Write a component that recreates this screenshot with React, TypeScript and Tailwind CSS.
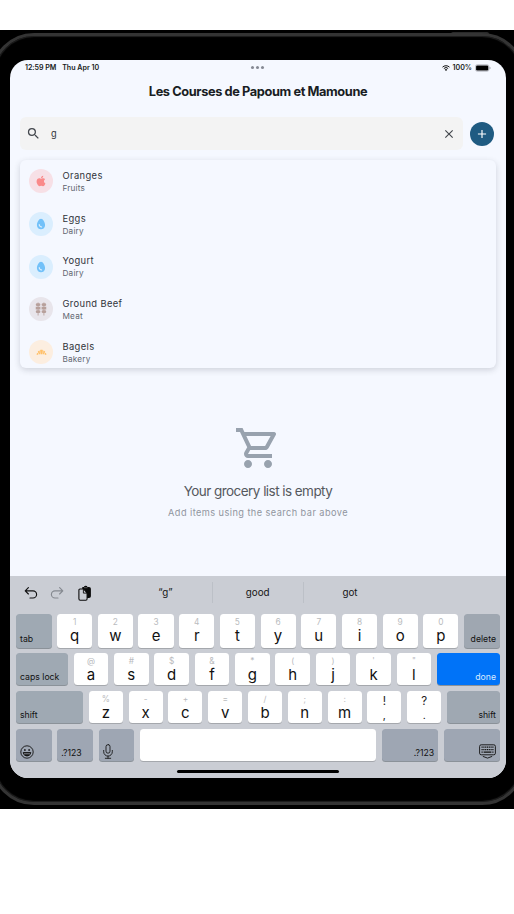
import React from 'react';
import {
  MdSearch,
  MdClose,
  MdAdd,
  MdOutlineShoppingCart,
  MdEgg,
  MdKebabDining,
  MdBakeryDining,
} from 'react-icons/md';
import { FaApple } from 'react-icons/fa';

const items = [
  { name: 'Oranges', category: 'Fruits', Icon: FaApple, tint: 'bg-[#f7e0e6] text-[#fa8a8a]', size: 'size-[12px]' },
  { name: 'Eggs', category: 'Dairy', Icon: MdEgg, tint: 'bg-[#daeefe] text-[#72c1f9]', size: 'size-[14px]' },
  { name: 'Yogurt', category: 'Dairy', Icon: MdEgg, tint: 'bg-[#daeefe] text-[#72c1f9]', size: 'size-[14px]' },
  { name: 'Ground Beef', category: 'Meat', Icon: MdKebabDining, tint: 'bg-[#e8e5eb] text-[#b7a09b]', size: 'size-[14px]' },
  { name: 'Bagels', category: 'Bakery', Icon: MdBakeryDining, tint: 'bg-[#fceee0] text-[#ffc069]', size: 'size-[13px]' },
];

const row1 = [['1', 'q'], ['2', 'w'], ['3', 'e'], ['4', 'r'], ['5', 't'], ['6', 'y'], ['7', 'u'], ['8', 'i'], ['9', 'o'], ['0', 'p']];
const row2 = [['@', 'a'], ['#', 's'], ['$', 'd'], ['&', 'f'], ['*', 'g'], ['(', 'h'], [')', 'j'], ["'", 'k'], ['"', 'l']];
const row3 = [['%', 'z'], ['-', 'x'], ['+', 'c'], ['=', 'v'], ['/', 'b'], [';', 'n'], [':', 'm'], ['!', ','], ['?', '.']];

function Key({ top, main }: { top: string; main: string }) {
  const punctuation = top === '!' || top === '?';
  return (
    <div className="flex h-full min-w-0 flex-1 flex-col items-center rounded-[3.5px] bg-white pt-[4.5px] shadow-[0_1px_0_#a5a8ad]">
      <span className={punctuation ? 'text-[11.5px] leading-[13.5px] text-[#222]' : 'text-[8.3px] leading-[9px] text-[#b9bbbe]'}>{top}</span>
      <span className={punctuation ? 'text-[10.5px] leading-[13.5px] text-[#111]' : 'text-[15px] leading-[17.5px] text-[#111]'}>{main}</span>
    </div>
  );
}

function DarkKey({ children, className }: { children: React.ReactNode; className: string }) {
  return (
    <div className={'flex h-full shrink-0 items-end rounded-[3.5px] px-1 pb-[2.6px] text-[8.7px] leading-[11px] text-[#111] shadow-[0_1px_0_#8b9299] ' + className}>
      {children}
    </div>
  );
}

function Undo({ className }: { className: string }) {
  return (
    <svg viewBox="0 0 14 14" className={'h-[14px] w-[14px] ' + className} fill="none" stroke="currentColor" strokeWidth="1.15" strokeLinecap="round" strokeLinejoin="round">
      <path d="M4.4 1.6 1.2 4.8l3.2 3.2M1.4 4.8h7.6a3.6 3.6 0 0 1 0 7.2H6" />
    </svg>
  );
}

function StatusBar() {
  return (
    <div className="grid h-[15px] grid-cols-3 items-center px-[15px] text-[7.1px] font-semibold leading-[15px] text-[#161a20]">
      <div className="flex gap-[6px]">
        <span className="tracking-[-0.05px]">12:59 PM</span>
        <span>Thu Apr 10</span>
      </div>
      <div className="flex justify-center gap-[2px]">
        <i className="size-[3px] rounded-full bg-[#858994]" />
        <i className="size-[3px] rounded-full bg-[#858994]" />
        <i className="size-[3px] rounded-full bg-[#858994]" />
      </div>
      <div className="flex items-center justify-end">
        <svg viewBox="0 0 16 12" className="mr-[3px] h-[6px] w-[8px]" fill="none" stroke="#111" strokeWidth="2">
          <path d="M1 4.3a10 10 0 0 1 14 0M3.7 7a6.2 6.2 0 0 1 8.6 0" />
          <path d="m8 11.8-2.5-2.5a3.6 3.6 0 0 1 5 0Z" fill="#111" stroke="none" />
        </svg>
        <span>100%</span>
        <svg viewBox="0 0 16 8" className="ml-[3px] h-[8px] w-[16px]">
          <rect x=".4" y=".7" width="13.6" height="6.6" rx="2" fill="none" stroke="#9a9ea6" strokeWidth=".6" />
          <rect x="1.1" y="1.5" width="12.2" height="5" rx="1.3" fill="#000" />
          <path d="M14.6 3v2q1 0 1-1t-1-1" fill="#999da3" />
        </svg>
      </div>
    </div>
  );
}

function Keyboard() {
  return (
    <div className="h-[202px] bg-[#cacdd4] px-[6px]">
      <div className="flex h-[33px] items-center">
        <div className="flex w-[103.5px] items-center pl-[7.5px]">
          <Undo className="text-[#111]" />
          <Undo className="ml-[12.5px] -scale-x-100 text-[#858990]" />
          <svg viewBox="0 0 14 16" className="ml-[14px] h-[16px] w-[14px]">
            <path d="M4.3 1.9h1.6q.3-1.2 1.8-1.2t1.8 1.2H11q1.9 0 1.9 1.8v7.6q0 1.8-1.9 1.8H4.3Z" fill="#0a0a0a" />
            <path d="M6 2.7h3.5" stroke="#777" strokeWidth=".7" />
            <path d="M2 4h3.6l3.5 3.9v5.9q0 1.4-1.3 1.4H2.2q-1.3 0-1.3-1.4V5.3Q.9 4 2 4Z" fill="#cacdd4" stroke="#0a0a0a" strokeWidth="1.1" />
            <path d="M5.4 4.2v3.9H9" fill="none" stroke="#0a0a0a" strokeWidth=".9" />
          </svg>
        </div>
        <div className="flex h-[21px] items-center text-center text-[9.8px] text-[#151515]">
          <div className="w-[92px] pt-px">“g”</div>
          <div className="flex h-[21px] w-[92.5px] items-center justify-center border-x border-[#bcc0c7] pt-px">good</div>
          <div className="w-[92px] pt-px">got</div>
        </div>
      </div>
      <div className="mt-[4.6px] flex h-[34px] gap-[5.6px]">
        <DarkKey className="w-[35.5px] bg-[#9fa9b3]">tab</DarkKey>
        {row1.map(([a, b]) => <Key key={b} top={a} main={b} />)}
        <DarkKey className="w-[36px] justify-end bg-[#9fa7b1]">delete</DarkKey>
      </div>
      <div className="mt-[5.3px] flex h-[32.5px] gap-[5.8px]">
        <DarkKey className="w-[51.8px] bg-[#9fa9b3]"><span className="whitespace-nowrap">caps lock</span></DarkKey>
        {row2.map(([a, b]) => <Key key={b} top={a} main={b} />)}
        <DarkKey className="w-[63px] justify-end bg-[#0073f8]"><span className="text-[#d8eaff]">done</span></DarkKey>
      </div>
      <div className="mt-[5.5px] flex h-[32.5px] gap-[5.8px]">
        <DarkKey className="w-[67px] bg-[#9fa9b3]">shift</DarkKey>
        {row3.map(([a, b]) => <Key key={b} top={a} main={b} />)}
        <DarkKey className="w-[53px] justify-end bg-[#9fa8b2]">shift</DarkKey>
      </div>
      <div className="mt-[5.5px] flex h-[32.5px] gap-[5.8px]">
        <DarkKey className="w-[35.5px] bg-[#9ea6b3]">
          <svg viewBox="0 0 14 14" className="h-[14px] w-[14px]" fill="none" stroke="#111" strokeWidth=".9">
            <circle cx="7" cy="7" r="6.2" />
            <path d="M3.2 7.6h7.6Q10.2 11 7 11T3.2 7.6Z" fill="#111" />
            <path d="M4 8.8h6" stroke="#bbc0ca" strokeWidth=".7" />
            <circle cx="4.9" cy="5" r=".5" fill="#111" /><circle cx="9.1" cy="5" r=".5" fill="#111" />
          </svg>
        </DarkKey>
        <DarkKey className="w-[35.5px] bg-[#9ea6b3]">.?123</DarkKey>
        <DarkKey className="w-[35.5px] bg-[#9ea6b3]">
          <svg viewBox="0 0 10 15" className="h-[15px] w-[10px]" fill="none" stroke="#111" strokeWidth=".85" strokeLinecap="round">
            <rect x="3" y=".6" width="4" height="8.6" rx="2" />
            <path d="M.7 6.4v1.4a4.3 4.3 0 0 0 8.6 0V6.4M5 12.2v2M2.3 14.3h5.4" />
          </svg>
        </DarkKey>
        <div className="h-full flex-1 rounded-[3.5px] bg-white shadow-[0_1px_0_#a5a8ad]" />
        <DarkKey className="w-[56px] justify-end bg-[#9ea6b3]">.?123</DarkKey>
        <DarkKey className="w-[56px] justify-end bg-[#9ea6b3]">
          <svg viewBox="0 0 17 15" className="h-[15px] w-[17px]" fill="none" stroke="#111" strokeWidth=".9">
            <rect x=".6" y=".8" width="15.8" height="10" rx="1.6" />
            <path d="M2.5 3.2h12M2.5 5.6h12" strokeWidth="1.2" strokeDasharray="1.2 .6" />
            <path d="M2.5 8.2h1.2M4.6 8.2h7.8M13.3 8.2h1.2" strokeWidth="1.2" />
            <path d="m4.2 12.5 4.3 1.6 4.3-1.6" strokeLinecap="round" />
          </svg>
        </DarkKey>
      </div>
      <div className="mx-auto mt-[8.6px] h-[3.5px] w-[162px] rounded-full bg-black" />
    </div>
  );
}

export default function App() {
  return (
    <div className="h-[914px] w-[514px] overflow-hidden bg-white pt-[30px] font-['Inter',sans-serif]">
      <div className="relative h-[779px] overflow-hidden bg-black pt-[30px]">
        <div className="absolute left-[451px] top-[1.5px] h-[3px] w-[38px] rounded-t-[2px] bg-[#292929]" />
        <div className="absolute -left-[9px] top-[3px] h-[772px] w-[534px] rounded-[43px] border-[3px] border-[#343434] bg-black shadow-[inset_0_0_1px_1px_#202020]" />
        <div className="relative ml-[10px] flex h-[718px] w-[496px] flex-col overflow-hidden rounded-[18px] bg-[#f5f8ff]">
          <StatusBar />
          <h1 className="mt-[6px] text-center text-[12.8px] font-bold leading-[21px] tracking-[-0.4px] text-[#191d23]">Les Courses de Papoum et Mamoune</h1>
          <div className="mt-[15px] flex items-center pl-[10px] pr-[12px]">
            <div className="flex h-[33px] w-[443px] items-center rounded-[6px] bg-[#f3f3f3] pl-[6px] pr-[7px]">
              <MdSearch className="size-[15px] text-[#43474d]" />
              <span className="ml-[10px] flex-1 pt-px text-[9.2px] text-[#30343a]">g</span>
              <MdClose className="size-[14px] text-[#43474d]" />
            </div>
            <button className="ml-[7px] flex size-[24px] items-center justify-center rounded-full bg-[#1f5b82] text-white"><MdAdd className="size-[14px]" /></button>
          </div>
          <div className="ml-[10px] mt-[10px] h-[208px] w-[476px] shrink-0 overflow-hidden rounded-[6px] bg-[#f5f8ff] shadow-[0_2px_6px_rgba(50,55,70,0.2)]">
            {items.map(({ name, category, Icon, tint, size }) => (
              <div key={name} className="flex h-[42.7px] items-center pl-[9px]">
                <div className={'flex size-[24px] items-center justify-center rounded-full ' + tint}><Icon className={size} /></div>
                <div className="ml-[9.5px] pt-px">
                  <div className="text-[9.4px] leading-[13px] tracking-[0.36px] text-[#30343a]">{name}</div>
                  <div className="text-[8.2px] leading-[13px] tracking-[0.2px] text-[#60656f]">{category}</div>
                </div>
              </div>
            ))}
          </div>
          <div className="flex flex-1 flex-col items-center pt-[56px]">
            <MdOutlineShoppingCart className="size-[48px] text-[#98a2ae]" />
            <div className="mt-[9px] text-[13.5px] leading-[20px] tracking-[-0.55px] text-[#55585e]">Your grocery list is empty</div>
            <div className="mt-[4px] text-[9.2px] leading-[16px] tracking-[0.44px] text-[#90959e]">Add items using the search bar above</div>
          </div>
          <Keyboard />
        </div>
      </div>
    </div>
  );
}
